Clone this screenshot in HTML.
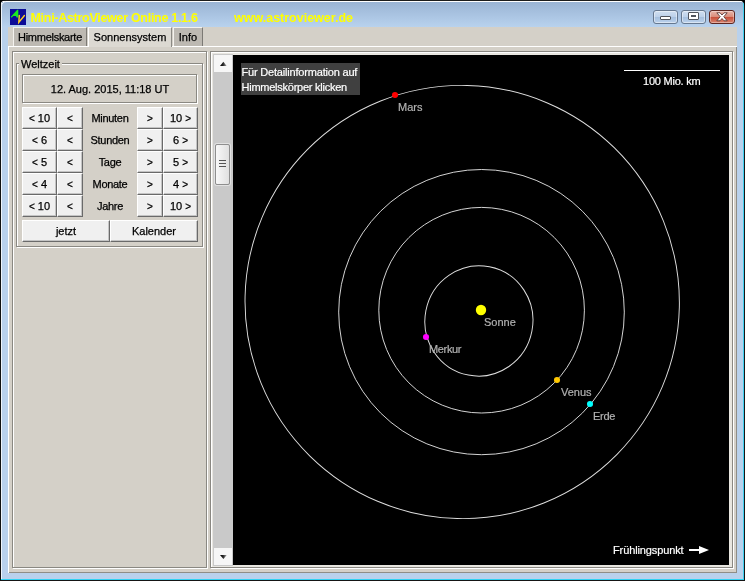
<!DOCTYPE html>
<html>
<head>
<meta charset="utf-8">
<title>Mini-AstroViewer Online 1.1.6</title>
<style>
html,body{margin:0;padding:0;}
body{width:745px;height:581px;overflow:hidden;position:relative;background:#000;font-family:"Liberation Sans",sans-serif;font-size:11px;color:#000;}
.abs{position:absolute;}
#win{will-change:transform;position:absolute;left:0;top:0;width:745px;height:581px;background:#b9d1ec;overflow:hidden;}
#titlebar{position:absolute;left:1px;top:1px;width:743px;height:26px;background:linear-gradient(#ffffff 0,#ffffff 1px,#9ab4d4 1px,#b8d2ee 26px);}
#frameL{position:absolute;left:0;top:0;width:1px;height:581px;background:#101010;}
#frameL2{position:absolute;left:1px;top:2px;width:1px;height:578px;background:#eef4fb;}
#frameT{position:absolute;left:0;top:0;width:745px;height:1px;background:#1c1c1c;}
#frameR{position:absolute;left:744px;top:0;width:1px;height:581px;background:#151515;}
#frameR2{position:absolute;left:743px;top:2px;width:1px;height:578px;background:#3fd0f0;}
#frameB{position:absolute;left:0;top:580px;width:745px;height:1px;background:#151515;}
#frameB2{position:absolute;left:1px;top:579px;width:743px;height:1px;background:#2fd2f2;}
.corner{position:absolute;width:3px;height:3px;background:#000;}
#content{position:absolute;left:8px;top:27px;width:729px;height:546px;background:#d4d0c8;}
.t,.tab,.btn,.lbl,.dt{-webkit-text-stroke:0.25px #000;}
.t{position:absolute;white-space:nowrap;line-height:13px;height:13px;}
#title{-webkit-text-stroke:0;text-shadow:0 0 4px rgba(255,255,255,.25);left:30.5px;top:11px;letter-spacing:-0.29px;font-weight:bold;font-size:12.5px;color:#ffff00;line-height:15px;height:15px;}
#url{-webkit-text-stroke:0;left:234px;top:11px;font-weight:bold;font-size:12.5px;color:#ffff00;line-height:15px;height:15px;}
.tab{position:absolute;box-sizing:border-box;text-align:center;white-space:nowrap;}
.btn{position:absolute;box-sizing:border-box;background:#f0f0f0;box-shadow:inset -1px -1px 0 #c4c4c4;border-top:1px solid #fff;border-left:1px solid #fff;border-right:1px solid #6a6a6a;border-bottom:1px solid #6a6a6a;text-align:center;white-space:nowrap;height:22px;line-height:21px;font-size:11px;color:#000;}
.a{font-size:10px;position:relative;top:-0.4px;}
.lbl{position:absolute;letter-spacing:-0.3px;padding-top:1px;text-align:center;white-space:nowrap;height:21px;line-height:21px;font-size:11px;left:83px;width:54px;}
.cl{-webkit-text-stroke:0.2px currentColor;position:absolute;white-space:nowrap;color:#b2b2b2;font-size:11px;line-height:13px;height:13px;}
</style>
</head>
<body>
<div id="win">
  <div id="titlebar"></div>
  <div id="frameT"></div><div id="frameL"></div><div id="frameL2"></div>
  <div id="frameR2"></div><div id="frameR"></div><div id="frameB2"></div><div id="frameB"></div>

  <!-- app icon -->
  <svg class="abs" style="left:10px;top:9px" width="16" height="16" viewBox="0 0 16 16">
    <rect width="16" height="16" fill="#0c0c98"/>
    <path d="M7.2 0.8 L8.3 0.8 L8.3 8.4 L6.6 8.4 L5.9 7.1 L3.3 7.1 L1.5 8.8 L0.8 7.8 L3.6 4.7 Z" fill="#18ea20"/>
    <path d="M9.3 6.4 L8.8 13.4 L14.4 6.5" fill="none" stroke="#ffd020" stroke-width="1.4" stroke-linejoin="miter" stroke-linecap="round"/>
  </svg>
  <!-- rounded top corners -->
  <svg class="abs" style="left:0;top:0" width="6" height="6" viewBox="0 0 6 6"><path d="M0 0 H6 A6 6 0 0 0 0 6 Z" fill="#000"/><path d="M6.5 1.5 A5 5 0 0 0 1.5 6.5" fill="none" stroke="#e8eef6" stroke-width="1"/></svg>
  <svg class="abs" style="left:738px;top:0" width="7" height="7" viewBox="0 0 7 7"><path d="M7 0 H0 A7 7 0 0 1 7 7 Z" fill="#000"/></svg>
  <div id="title" class="t">Mini-AstroViewer Online 1.1.6</div>
  <div id="url" class="t">www.astroviewer.de</div>

  <!-- caption buttons -->
  <div class="abs" style="left:653px;top:10px;width:25px;height:14px;border:1px solid #66788f;border-radius:3px;box-sizing:border-box;background:linear-gradient(#d0dff0 0,#bed2ea 46%,#a6c0de 52%,#bbd1ec 100%);box-shadow:inset 0 0 0 1px rgba(255,255,255,.45);"></div>
  <div class="abs" style="left:660px;top:16px;width:11px;height:4px;box-sizing:border-box;border:1px solid #50545c;background:#fff;border-radius:1px;"></div>
  <div class="abs" style="left:681px;top:10px;width:25px;height:14px;border:1px solid #66788f;border-radius:3px;box-sizing:border-box;background:linear-gradient(#d0dff0 0,#bed2ea 46%,#a6c0de 52%,#bbd1ec 100%);box-shadow:inset 0 0 0 1px rgba(255,255,255,.45);"></div>
  <div class="abs" style="left:688px;top:12px;width:11px;height:8px;box-sizing:border-box;border:1px solid #50545c;background:#fff;border-radius:1px;"></div>
  <div class="abs" style="left:691px;top:15px;width:5px;height:2px;background:#50545c;"></div>
  <div class="abs" style="left:709px;top:10px;width:26px;height:14px;border:1px solid #5e2620;border-radius:3px;box-sizing:border-box;background:linear-gradient(#e8b6aa 0,#db8e7c 46%,#c9503a 52%,#d88470 100%);box-shadow:inset 0 0 0 1px rgba(255,255,255,.35);"></div>
  <svg class="abs" style="left:716px;top:12px" width="12" height="10" viewBox="0 0 12 10">
    <path d="M0.8 0.8 L4 0.8 L6 3 L8 0.8 L11.2 0.8 L7.8 4.7 L11.2 8.8 L8 8.8 L6 6.5 L4 8.8 L0.8 8.8 L4.2 4.7 Z" fill="#fff" stroke="#5c3a38" stroke-width="0.9"/>
  </svg>

  <div id="content"></div>

  <!-- tabs -->
  <div class="tab" style="left:13px;top:27px;width:74px;height:19px;background:#bdb9b2;border-left:1px solid #f4f2ee;border-top:1px solid #f4f2ee;border-right:1px solid #7c7a75;line-height:18px;letter-spacing:-0.27px;">Himmelskarte</div>
  <div class="tab" style="left:88px;top:27px;width:84px;height:20px;background:#dcd9d2;border-left:1px solid #ffffff;border-top:1px solid #ffffff;border-right:1px solid #8c8a85;line-height:19px;">Sonnensystem</div>
  <div class="tab" style="left:173px;top:27px;width:30px;height:19px;background:#bdb9b2;border-left:1px solid #f4f2ee;border-top:1px solid #f4f2ee;border-right:1px solid #7c7a75;line-height:18px;">Info</div>

  <!-- tab pane outline -->
  <div class="abs" style="left:8px;top:46px;width:80px;height:1px;background:#fff;"></div>
  <div class="abs" style="left:172px;top:46px;width:565px;height:1px;background:#fff;"></div>
  <div class="abs" style="left:8px;top:46px;width:1px;height:527px;background:#fff;"></div>
  <div class="abs" style="left:9px;top:572px;width:728px;height:1px;background:#8f8d86;"></div>
  <div class="abs" style="left:736px;top:47px;width:1px;height:526px;background:#8f8d86;"></div>

  <!-- left panel etched border -->
  <div class="abs" style="left:13px;top:52px;width:195px;height:517px;box-sizing:border-box;border:1px solid #fff;"></div>
  <div class="abs" style="left:12px;top:51px;width:195px;height:517px;box-sizing:border-box;border:1px solid #8a8882;"></div>

  <!-- right panel etched border -->
  <div class="abs" style="left:211px;top:52px;width:523px;height:517px;box-sizing:border-box;border:1px solid #fff;"></div>
  <div class="abs" style="left:210px;top:51px;width:523px;height:517px;box-sizing:border-box;border:1px solid #8a8882;"></div>
  <!-- inner area of right panel -->
  <div class="abs" style="left:212px;top:53px;width:520px;height:514px;background:#e8e6e0;"></div>

  <!-- scrollbar -->
  <div class="abs" style="left:213px;top:54px;width:20px;height:512px;background:#c9c9c9;"></div>
  <div class="abs" style="left:214px;top:55px;width:18px;height:17px;background:#f6f6f6;"></div>
  <div class="abs" style="left:214px;top:548px;width:18px;height:17px;background:#f6f6f6;"></div>
  <svg class="abs" style="left:214px;top:55px" width="17" height="17" viewBox="0 0 17 17"><defs><linearGradient id="ag" x1="0" x2="1" y1="0" y2="0"><stop offset="0" stop-color="#000"/><stop offset="0.45" stop-color="#222"/><stop offset="1" stop-color="#aaa"/></linearGradient></defs><path d="M6 10.9 L9.4 6.8 L12.7 10.9 Z" fill="url(#ag)"/></svg>
  <svg class="abs" style="left:214px;top:548px" width="17" height="17" viewBox="0 0 17 17"><path d="M6 7 L12.8 7 L9.4 11.1 Z" fill="url(#ag)"/></svg>
  <div class="abs" style="left:215px;top:144px;width:15px;height:41px;box-sizing:border-box;border:1px solid #8e8e8e;border-radius:2px;background:linear-gradient(90deg,#f8f8f8 0,#e0e0e0 100%);box-shadow:0 0 0 1px #e2e2e2;"></div>
  <div class="abs" style="left:219px;top:160px;width:7px;height:1px;background:#555;"></div>
  <div class="abs" style="left:219px;top:163px;width:7px;height:1px;background:#555;"></div>
  <div class="abs" style="left:219px;top:166px;width:7px;height:1px;background:#555;"></div>

  <!-- canvas -->
  <svg class="abs" style="left:233px;top:55px" width="496" height="510" viewBox="233 55 496 510">
    <rect x="233" y="55" width="496" height="510" fill="#000"/>
    <g fill="none" stroke="#dedede" stroke-width="0.95">
      <ellipse cx="478.9" cy="320.9" rx="55.2" ry="54" transform="rotate(101 478.9 320.9)"/>
      <ellipse cx="481.6" cy="310.2" rx="102.8" ry="102.8"/>
      <ellipse cx="481.5" cy="312.1" rx="142.8" ry="142.6"/>
      <ellipse cx="462.2" cy="302" rx="217.3" ry="216.5" transform="rotate(23 462.2 302)"/>
    </g>
    <circle cx="481" cy="310" r="5.2" fill="#ffff00"/>
    <circle cx="426" cy="337" r="3.05" fill="#ff00ff"/>
    <circle cx="557" cy="380" r="3.05" fill="#ffc800"/>
    <circle cx="590" cy="404" r="3.05" fill="#00ffff"/>
    <circle cx="395" cy="95" r="3.05" fill="#ff0000"/>
    <rect x="241" y="63" width="119" height="32" fill="#404040"/>
    <rect x="624" y="70" width="96" height="1" fill="#fff"/>
    <path d="M689 549 H699 V546 L709 550 L699 554 V551 H689 Z" fill="#fff"/>
  </svg>
  <div class="cl" style="left:241.5px;top:66px;color:#fff;letter-spacing:-0.19px;">Für Detailinformation auf</div>
  <div class="cl" style="left:241.5px;top:81px;color:#fff;letter-spacing:-0.25px;">Himmelskörper klicken</div>
  <div class="cl" style="left:643px;top:75px;color:#fff;letter-spacing:-0.22px;">100 Mio. km</div>
  <div class="cl" style="left:613px;top:544px;color:#fff;letter-spacing:-0.12px;">Frühlingspunkt</div>
  <div class="cl" style="left:484px;top:316px;">Sonne</div>
  <div class="cl" style="left:429px;top:343px;letter-spacing:-0.35px;">Merkur</div>
  <div class="cl" style="left:561px;top:386px;">Venus</div>
  <div class="cl" style="left:593px;top:410px;letter-spacing:-0.3px;">Erde</div>
  <div class="cl" style="left:398px;top:101px;">Mars</div>

  <!-- Weltzeit fieldset -->
  <div class="abs" style="left:17px;top:64px;width:187px;height:184px;box-sizing:border-box;border:1px solid #fff;"></div>
  <div class="abs" style="left:16px;top:63px;width:187px;height:184px;box-sizing:border-box;border:1px solid #8a8882;"></div>
  <div class="abs" style="left:19px;top:58px;width:43px;height:12px;background:#d4d0c8;"></div>
  <div class="t" style="left:21px;top:58px;">Weltzeit</div>

  <!-- date field -->
  <div class="abs" style="left:23px;top:75px;width:175px;height:29px;box-sizing:border-box;border:1px solid #fff;"></div>
  <div class="abs" style="left:22px;top:74px;width:175px;height:29px;box-sizing:border-box;border:1px solid #8a8882;"></div>
  <div class="abs dt" style="left:22px;top:74px;width:176px;height:29px;text-align:center;line-height:30px;white-space:nowrap;">12. Aug. 2015, 11:18 UT</div>

  <!-- rows -->
  <div class="btn" style="left:22px;top:107px;width:35px;"><span class="a">&lt;</span> 10</div>
  <div class="btn" style="left:57px;top:107px;width:26px;"><span class="a">&lt;</span></div>
  <div class="lbl" style="top:107px;">Minuten</div>
  <div class="btn" style="left:137px;top:107px;width:26px;"><span class="a">&gt;</span></div>
  <div class="btn" style="left:163px;top:107px;width:35px;">10 <span class="a">&gt;</span></div>

  <div class="btn" style="left:22px;top:129px;width:35px;"><span class="a">&lt;</span> 6</div>
  <div class="btn" style="left:57px;top:129px;width:26px;"><span class="a">&lt;</span></div>
  <div class="lbl" style="top:129px;">Stunden</div>
  <div class="btn" style="left:137px;top:129px;width:26px;"><span class="a">&gt;</span></div>
  <div class="btn" style="left:163px;top:129px;width:35px;">6 <span class="a">&gt;</span></div>

  <div class="btn" style="left:22px;top:151px;width:35px;"><span class="a">&lt;</span> 5</div>
  <div class="btn" style="left:57px;top:151px;width:26px;"><span class="a">&lt;</span></div>
  <div class="lbl" style="top:151px;">Tage</div>
  <div class="btn" style="left:137px;top:151px;width:26px;"><span class="a">&gt;</span></div>
  <div class="btn" style="left:163px;top:151px;width:35px;">5 <span class="a">&gt;</span></div>

  <div class="btn" style="left:22px;top:173px;width:35px;"><span class="a">&lt;</span> 4</div>
  <div class="btn" style="left:57px;top:173px;width:26px;"><span class="a">&lt;</span></div>
  <div class="lbl" style="top:173px;">Monate</div>
  <div class="btn" style="left:137px;top:173px;width:26px;"><span class="a">&gt;</span></div>
  <div class="btn" style="left:163px;top:173px;width:35px;">4 <span class="a">&gt;</span></div>

  <div class="btn" style="left:22px;top:195px;width:35px;"><span class="a">&lt;</span> 10</div>
  <div class="btn" style="left:57px;top:195px;width:26px;"><span class="a">&lt;</span></div>
  <div class="lbl" style="top:195px;">Jahre</div>
  <div class="btn" style="left:137px;top:195px;width:26px;"><span class="a">&gt;</span></div>
  <div class="btn" style="left:163px;top:195px;width:35px;">10 <span class="a">&gt;</span></div>

  <div class="btn" style="left:22px;top:220px;width:88px;height:22px;line-height:21px;">jetzt</div>
  <div class="btn" style="left:110px;top:220px;width:88px;height:22px;line-height:21px;">Kalender</div>
</div>
</body>
</html>
